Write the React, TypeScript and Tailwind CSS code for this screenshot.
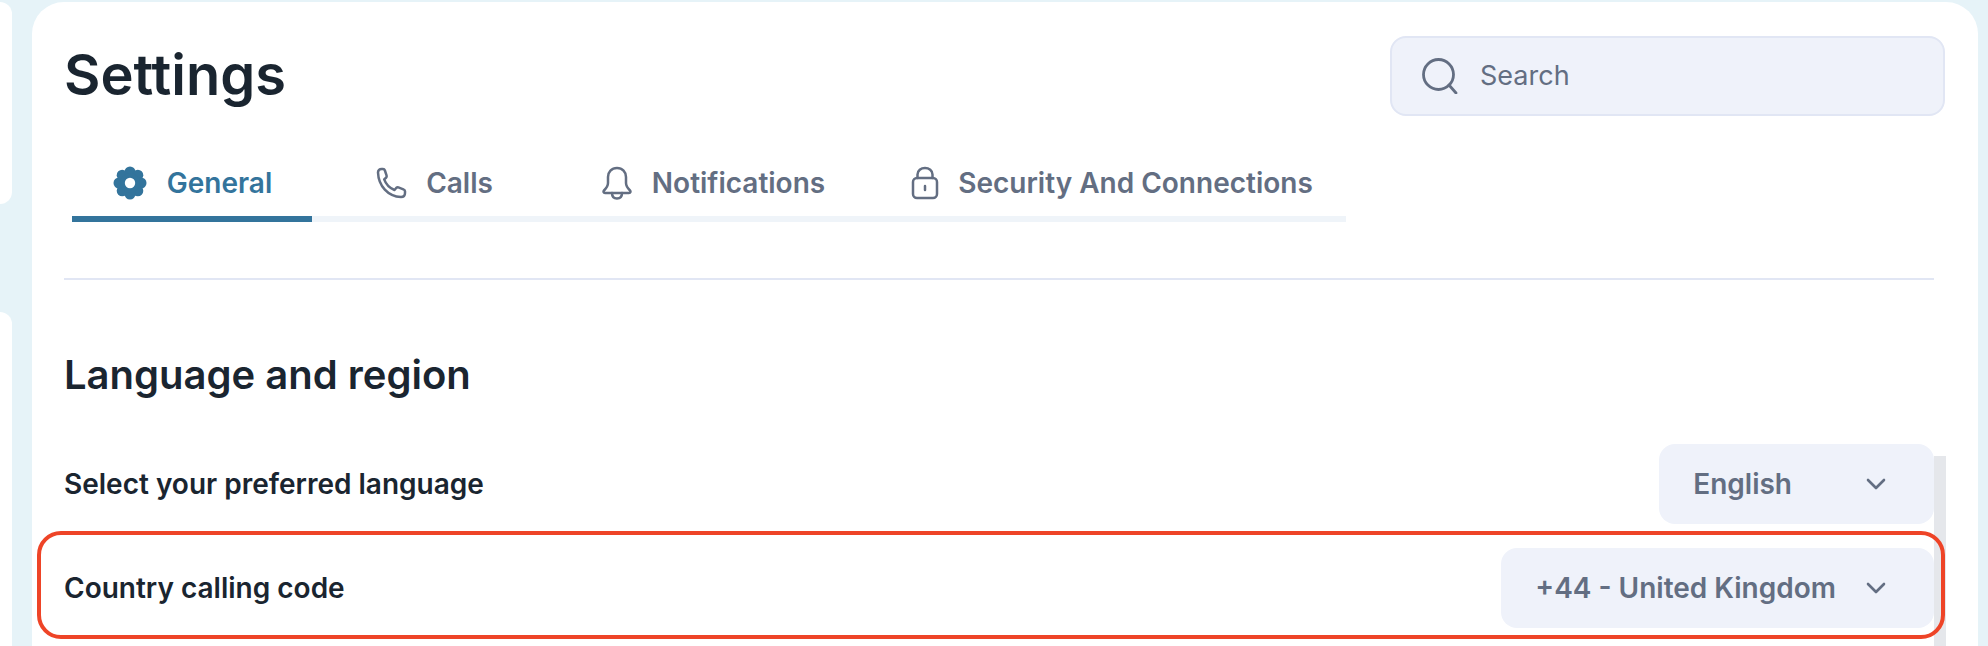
import { ReactNode } from "react";

const font = { fontFamily: "Inter, 'Liberation Sans', sans-serif" };

function GearIcon() {
  return (
    <svg width="36" height="36" viewBox="0 0 36 36" fill="#33749c">
      <circle cx="18" cy="7" r="5.5" />
      <circle cx="25.8" cy="10.2" r="5.5" />
      <circle cx="29" cy="18" r="5.5" />
      <circle cx="25.8" cy="25.8" r="5.5" />
      <circle cx="18" cy="29" r="5.5" />
      <circle cx="10.2" cy="25.8" r="5.5" />
      <circle cx="7" cy="18" r="5.5" />
      <circle cx="10.2" cy="10.2" r="5.5" />
      <circle cx="18" cy="18" r="10" />
      <circle cx="18" cy="18" r="5.2" fill="#ffffff" />
    </svg>
  );
}

function PhoneIcon() {
  return (
    <svg width="32" height="32" viewBox="0 0 32 32" fill="none" stroke="#636e82" strokeWidth="2.5" strokeLinejoin="round">
      <path d="M3 5.5 C3 3.5 4.5 2 6.5 2 H8 C9 2 9.6 2.6 9.9 3.5 L11.6 8.6 C11.9 9.5 11.6 10.2 11 10.8 L9.2 12.4 C11 17.5 14.5 21 19.5 23 L21.2 21 C21.8 20.4 22.6 20.1 23.4 20.4 L28.4 22.3 C29.4 22.7 30 23.3 30 24.3 V26 C30 28.6 28.4 30 26 30 C13 29.5 3.5 19 3 5.5 Z" />
    </svg>
  );
}

function BellIcon() {
  return (
    <svg width="32" height="34" viewBox="0 0 32 34" fill="none" stroke="#636e82" strokeWidth="2.5" strokeLinecap="round" strokeLinejoin="round">
      <path d="M16 2 C10.5 2 7 6 7 11 V17 C7 20 5.5 22 3 24.5 C2 25.5 2.5 27 4 27 H28 C29.5 27 30 25.5 29 24.5 C26.5 22 25 20 25 17 V11 C25 6 21.5 2 16 2 Z" />
      <path d="M11 27 C11 30.5 13 32.5 16 32.5 C19 32.5 21 30.5 21 27" />
    </svg>
  );
}

function LockIcon() {
  return (
    <svg width="28" height="34" viewBox="0 0 28 34" fill="none" stroke="#636e82" strokeWidth="2.5" strokeLinecap="round" strokeLinejoin="round">
      <rect x="2" y="12" width="24" height="20" rx="4" />
      <path d="M6.5 12 V8.5 C6.5 4.5 10 2 14 2 C18 2 21.5 4.5 21.5 8.5 V12" />
      <path d="M14 20 V24" />
    </svg>
  );
}

function SearchIcon() {
  return (
    <svg width="36" height="36" viewBox="0 0 36 36" fill="none" stroke="#636e82" strokeWidth="2.8" strokeLinecap="round" className="shrink-0">
      <circle cx="16.5" cy="16.5" r="15" />
      <path d="M27 27 L34 35" />
    </svg>
  );
}

function Chevron() {
  return (
    <svg width="20" height="12" viewBox="0 0 20 12" fill="none" stroke="#636e82" strokeWidth="2.6" strokeLinecap="round" strokeLinejoin="round" className="shrink-0">
      <path d="M2 2 L10 10 L18 2" />
    </svg>
  );
}

function Tab(props: { icon: ReactNode; label: string; active?: boolean; className: string }) {
  return (
    <div
      className={`flex h-[62px] items-center justify-center gap-[19px] border-b-[6px] pb-[10px] text-[28px] font-semibold ${props.className} ${
        props.active ? "border-[#33749c] text-[#33749c]" : "border-[#eff4f9] text-[#636e82]"
      }`}
    >
      {props.icon}
      <span>{props.label}</span>
    </div>
  );
}

function SelectRow(props: { label: string; value: string; gapClass: string }) {
  return (
    <div className="flex items-center justify-between">
      <span className="text-[28px] font-semibold text-[#1a2530]">{props.label}</span>
      <div className="z-10 flex h-20 items-center rounded-2xl bg-[#eff2fa] pl-[34px] pr-12 text-[28px] font-semibold text-[#636e82]">
        <span>{props.value}</span>
        <span className={props.gapClass}>
          <Chevron />
        </span>
      </div>
    </div>
  );
}

export default function App() {
  return (
    <div style={font} className="flex h-[646px] w-[1988px] overflow-hidden bg-[#e6f3f8] pt-[2px]">
      {/* side panels */}
      <div className="flex w-3 shrink-0 flex-col justify-between">
        <div className="h-[202px] rounded-r-[28px] bg-white" />
        <div className="h-[334px] rounded-tr-[28px] bg-white" />
      </div>

      {/* main card */}
      <main className="relative ml-5 w-[1946px] rounded-t-[32px] bg-white pl-8 pr-11 pt-[34px]">
        <header className="flex items-start justify-between">
          <h1 className="mt-[7px] text-[56px] font-semibold leading-[64px] text-[#1a2530]">Settings</h1>
          <div className="-mr-[11px] flex h-20 w-[555px] items-center gap-[22px] rounded-2xl border-2 border-[#e1e6f4] bg-[#eff2fa] pl-[30px] text-[27px] text-[#636e82]">
            <SearchIcon />
            <span>Search</span>
          </div>
        </header>

        <nav className="ml-2 mt-[44px] flex w-[1274px]">
          <Tab active icon={<GearIcon />} label="General" className="w-[240px]" />
          <Tab icon={<PhoneIcon />} label="Calls" className="w-[244px]" />
          <Tab icon={<BellIcon />} label="Notifications" className="w-[314px]" />
          <Tab icon={<LockIcon />} label="Security And Connections" className="w-[476px] pl-2" />
        </nav>

        <hr className="mt-14 border-t-2 border-[#e1e6f4]" />

        <h2 className="mt-[70px] text-[40px] font-semibold leading-[50px] text-[#1a2530]">Language and region</h2>

        <div className="mt-[44px] flex flex-col gap-6">
          <SelectRow label="Select your preferred language" value="English" gapClass="ml-[74px]" />
          <SelectRow label="Country calling code" value="+44 - United Kingdom" gapClass="ml-[30px]" />
        </div>

        {/* scrollbar track */}
        <div className="absolute bottom-0 left-[1902px] top-[454px] w-3 bg-[#e5e7eb]" />
        {/* red highlight round the row */}
        <div className="absolute left-[5px] top-[529px] z-20 h-[108px] w-[1908px] rounded-[24px] border-4 border-[#ee4427]" />
      </main>
    </div>
  );
}
